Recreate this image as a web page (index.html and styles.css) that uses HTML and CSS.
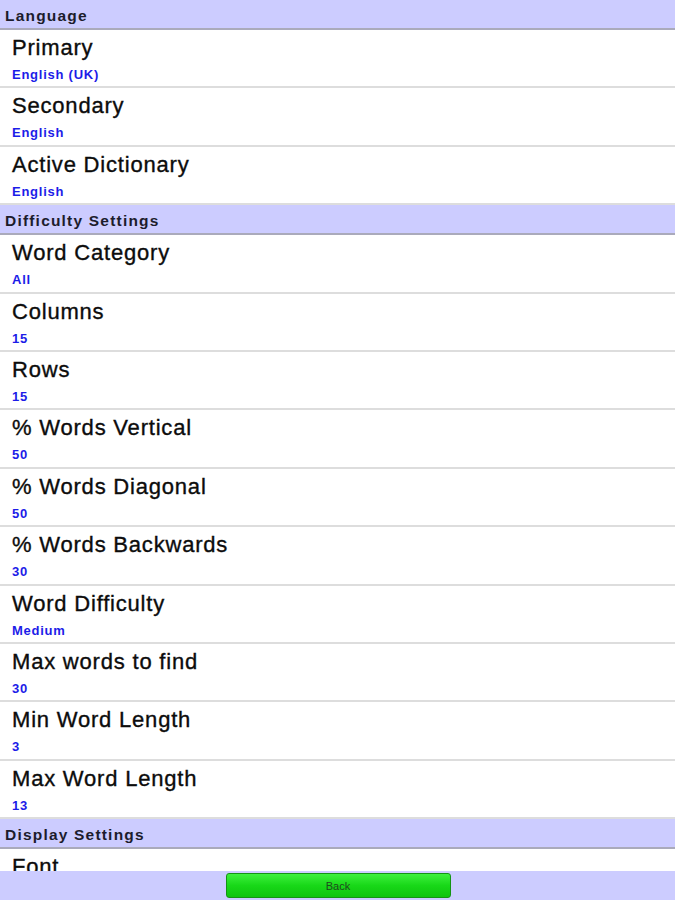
FILE: index.html
```html
<!DOCTYPE html>
<html>
<head>
<meta charset="utf-8">
<link rel="stylesheet" href="styles.css">
</head>
<body>
<div class="screen">
  <div class="list">
    <div class="section">Language</div>
    <div class="row"><div class="title">Primary</div><div class="value">English (UK)</div></div>
    <div class="row"><div class="title">Secondary</div><div class="value">English</div></div>
    <div class="row"><div class="title">Active Dictionary</div><div class="value">English</div></div>
    <div class="section">Difficulty Settings</div>
    <div class="row"><div class="title">Word Category</div><div class="value">All</div></div>
    <div class="row"><div class="title">Columns</div><div class="value">15</div></div>
    <div class="row"><div class="title">Rows</div><div class="value">15</div></div>
    <div class="row"><div class="title">% Words Vertical</div><div class="value">50</div></div>
    <div class="row"><div class="title">% Words Diagonal</div><div class="value">50</div></div>
    <div class="row"><div class="title">% Words Backwards</div><div class="value">30</div></div>
    <div class="row"><div class="title">Word Difficulty</div><div class="value">Medium</div></div>
    <div class="row"><div class="title">Max words to find</div><div class="value">30</div></div>
    <div class="row"><div class="title">Min Word Length</div><div class="value">3</div></div>
    <div class="row"><div class="title">Max Word Length</div><div class="value">13</div></div>
    <div class="section">Display Settings</div>
    <div class="row"><div class="title">Font</div></div>
  </div>
  <div class="footer">
    <button class="back">Back</button>
  </div>
</div>
</body>
</html>
```

FILE: styles.css
```css
html, body {
  margin: 0;
  padding: 0;
  background: #ffffff;
}

.screen {
  width: 675px;
  height: 900px;
  display: flex;
  flex-direction: column;
  font-family: "Liberation Sans", Arial, sans-serif;
}

.list {
  flex: 1;
  overflow: hidden;
  background: #ffffff;
}

.section {
  box-sizing: border-box;
  height: 30px;
  padding: 7px 0 0 5px;
  background: #ccccff;
  border-bottom: 2px solid #aaaabb;
  font-size: 15.5px;
  line-height: 18px;
  font-weight: bold;
  letter-spacing: 1.2px;
  color: #1c1c2c;
}

.row {
  box-sizing: border-box;
  height: 58.4px;
  padding: 6px 0 0 12px;
  border-bottom: 2px solid #dddddd;
  overflow: hidden;
}

.title {
  font-size: 22px;
  line-height: 24px;
  letter-spacing: 0.8px;
  color: #0c0c0c;
  -webkit-text-stroke: 0.35px #0c0c0c;
}

.value {
  margin-top: 7px;
  font-size: 13px;
  line-height: 15px;
  font-weight: bold;
  letter-spacing: 0.75px;
  color: #1c1ce8;
}

.footer {
  height: 29px;
  flex: none;
  background: #ccccff;
  display: flex;
  align-items: center;
  justify-content: center;
}

.back {
  width: 225px;
  height: 25px;
  margin-left: 1px;
  border: 1px solid #149414;
  border-radius: 3px;
  background: linear-gradient(to bottom, #3ef03e 0%, #18d818 50%, #0fc40f 100%);
  font-family: "Liberation Sans", Arial, sans-serif;
  font-size: 11px;
  color: #1e4a1e;
  padding: 0;
}
```
